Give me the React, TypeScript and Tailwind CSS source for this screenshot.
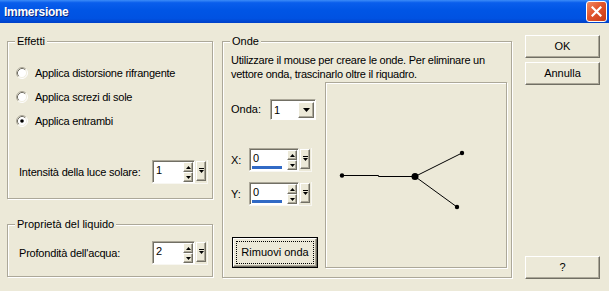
import React from "react";

const raised =
  "border border-t-white border-l-white border-r-[#716F64] border-b-[#716F64] shadow-[inset_-1px_-1px_0_#ACA899] bg-[#ECE9D8]";
const sunken =
  "border border-t-[#ACA899] border-l-[#ACA899] border-r-white border-b-white";

function Radio({ checked, label }: { checked?: boolean; label: string }) {
  return (
    <div className="flex items-center h-[16px]">
      <svg width="12" height="12" viewBox="0 0 12 12" className="shrink-0">
        <circle cx="6" cy="6" r="5" fill="#fff" />
        <path d="M2.11 9.89A5.5 5.5 0 0 1 9.89 2.11" fill="none" stroke="#ACA899" />
        <path d="M9.89 2.11A5.5 5.5 0 0 1 2.11 9.89" fill="none" stroke="#fff" />
        <path d="M2.82 9.18A4.5 4.5 0 0 1 9.18 2.82" fill="none" stroke="#716F64" />
        <path d="M9.18 2.82A4.5 4.5 0 0 1 2.82 9.18" fill="none" stroke="#F1EFE2" />
        {checked && <circle cx="6" cy="6" r="1.8" fill="#000" />}
      </svg>
      <span className="ml-[7px] tracking-[-0.25px]">{label}</span>
    </div>
  );
}

function Arrow({ up }: { up?: boolean }) {
  return (
    <svg width="5" height="3" viewBox="0 0 5 3">
      {up ? <path d="M0 3H5L2.5 0Z" fill="#000" /> : <path d="M0 0H5L2.5 3Z" fill="#000" />}
    </svg>
  );
}

function Spin({ value, fieldW, bar }: { value: string; fieldW: string; bar?: boolean }) {
  return (
    <div className="flex items-start h-[24px] border-r border-b border-r-[#F8F7F2] border-b-[#F8F7F2] pr-[1px]">
      <div className={`flex h-[23px] ${fieldW} ${sunken}`}>
        <div className="flex flex-1 bg-white shadow-[inset_1px_1px_0_#716F64]">
          <div className="flex flex-1 flex-col pl-[3px] pt-[2px]">
            <span className="leading-[15px]">{value}</span>
            {bar && <div className="mt-auto mb-[1px] -ml-[1px] h-[3px] w-[30px] bg-[#316AC5]" />}
          </div>
          <div className="flex flex-col w-[11px] pt-[1px] pr-[1px]">
            <div className={`h-[10px] flex items-center justify-center ${raised}`}>
              <Arrow up />
            </div>
            <div className={`h-[10px] flex items-center justify-center ${raised}`}>
              <Arrow />
            </div>
          </div>
        </div>
      </div>
      <div className={`ml-[1px] mt-[1px] w-[10px] h-[20px] flex items-center justify-center ${raised}`}>
        <svg width="5" height="6" viewBox="0 0 5 6">
          <rect x="0" y="0" width="5" height="1" fill="#000" />
          <path d="M0 2H5L2.5 5Z" fill="#000" />
        </svg>
      </div>
    </div>
  );
}

export default function App() {
  return (
    <div className="w-[609px] h-[291px] bg-[#ECE9D8] flex flex-col overflow-hidden font-['Liberation_Sans',Arial,sans-serif] text-[11px] text-black">
      {/* Title bar */}
      <div className="h-[23px] shrink-0 flex items-center pl-[4px] pr-[2px] bg-[linear-gradient(180deg,#3C8CF8_0%,#0A5EEC_12%,#0055E5_45%,#0052E2_80%,#0040C8_100%)]">
        <span className="flex-1 text-white font-bold text-[12px] tracking-[-0.3px] [text-shadow:1px_1px_0_#0A2680]">
          Immersione
        </span>
        <div className="w-[21px] h-[21px] rounded-[3px] border border-white bg-[linear-gradient(135deg,#F08A64_0%,#E2542C_45%,#C63A16_100%)] flex items-center justify-center">
          <svg width="11" height="11" viewBox="0 0 11 11">
            <path d="M1.5 1.5L9.5 9.5M9.5 1.5L1.5 9.5" stroke="#fff" strokeWidth="2.2" strokeLinecap="square" />
          </svg>
        </div>
      </div>

      {/* Body */}
      <div className="flex flex-1 pl-[7px] pt-[12px]">
        {/* Left column */}
        <div className="flex flex-col w-[206px]">
          <fieldset className="m-0 p-0 border border-[#ACA899] shadow-[inset_1px_1px_0_#fff,1px_1px_0_#fff]">
            <legend className="ml-[7px] px-[2px] leading-[13px] bg-[#ECE9D8]">Effetti</legend>
            <div className="pl-[8px] pt-[17px] pb-[14px] flex flex-col">
              <div className="flex flex-col gap-[8px]">
                <Radio label="Applica distorsione rifrangente" />
                <Radio label="Applica screzi di sole" />
                <Radio checked label="Applica entrambi" />
              </div>
              <div className="mt-[31px] flex items-center">
                <span className="ml-[3px] w-[133px] tracking-[-0.2px]">Intensità della luce solare:</span>
                <Spin value="1" fieldW="w-[43px]" />
              </div>
            </div>
          </fieldset>

          <fieldset className="mt-[19px] m-0 p-0 border border-[#ACA899] shadow-[inset_1px_1px_0_#fff,1px_1px_0_#fff]">
            <legend className="ml-[7px] px-[2px] leading-[13px] bg-[#ECE9D8]">Proprietà del liquido</legend>
            <div className="pl-[8px] pt-[10px] pb-[11px] flex items-center">
              <span className="ml-[3px] w-[133px] tracking-[-0.2px]">Profondità dell'acqua:</span>
              <Spin value="2" fieldW="w-[43px]" />
            </div>
          </fieldset>
        </div>

        {/* Onde */}
        <fieldset className="ml-[9px] m-0 p-0 w-[290px] self-start border border-[#ACA899] shadow-[inset_1px_1px_0_#fff,1px_1px_0_#fff]">
          <legend className="ml-[7px] px-[2px] leading-[13px] bg-[#ECE9D8]">Onde</legend>
          <div className="pl-[8px] pr-[4px] pt-[5px] pb-[9px] flex flex-col">
            <p className="leading-[14px] tracking-[-0.25px]">
              Utilizzare il mouse per creare le onde. Per eliminare un
              <br />
              vettore onda, trascinarlo oltre il riquadro.
            </p>
            <div className="mt-[1px] flex">
              <div className="w-[94px] shrink-0 flex flex-col">
                <div className="mt-[17px] flex items-center h-[21px]">
                  <span className="w-[39px]">Onda:</span>
                  <div className={`w-[46px] h-[21px] flex ${sunken}`}>
                    <div className="flex flex-1 bg-white shadow-[inset_1px_1px_0_#716F64]">
                      <span className="flex-1 pl-[3px] pt-[3px] leading-[14px]">1</span>
                      <div className={`w-[16px] mt-[2px] mb-[1px] mr-[1px] flex items-center justify-center ${raised}`}>
                        <svg width="7" height="4" viewBox="0 0 7 4">
                          <path d="M0 0H7L3.5 4Z" fill="#000" />
                        </svg>
                      </div>
                    </div>
                  </div>
                </div>
                <div className="mt-[28px] flex items-center h-[24px]">
                  <span className="w-[18px]">X:</span>
                  <Spin value="0" fieldW="w-[50px]" bar />
                </div>
                <div className="mt-[10px] flex items-center h-[24px]">
                  <span className="w-[18px]">Y:</span>
                  <Spin value="0" fieldW="w-[50px]" bar />
                </div>
                <div className="mt-[31px] ml-[1px] w-[86px] h-[31px] border border-black">
                  <div className={`h-full p-[2px] ${raised}`}>
                    <div className="h-full border border-dotted border-black flex items-center justify-center text-[11px]">
                      Rimuovi onda
                    </div>
                  </div>
                </div>
              </div>
              <div className="flex-1 h-[186px] border border-[#ACA899] shadow-[1px_1px_0_#fff,inset_1px_1px_0_#fff]">
                <svg width="100%" height="100%" viewBox="0 0 180 184">
                  <path d="M16 92.5H52.5V93.5H89" fill="none" stroke="#000" strokeWidth="1" />
                  <path d="M89 93.5L136 70" stroke="#000" strokeWidth="1" />
                  <path d="M89 93.5L131 124" stroke="#000" strokeWidth="1" />
                  <circle cx="16" cy="92.5" r="2.2" fill="#000" />
                  <circle cx="136" cy="70" r="2.2" fill="#000" />
                  <circle cx="131" cy="124" r="2.2" fill="#000" />
                  <circle cx="89" cy="93.5" r="3.5" fill="#000" />
                </svg>
              </div>
            </div>
          </div>
        </fieldset>

        {/* Buttons */}
        <div className="ml-[13px] w-[75px] flex flex-col pb-[12px]">
          <div className={`h-[23px] flex items-center justify-center ${raised}`}>OK</div>
          <div className={`mt-[4px] h-[23px] flex items-center justify-center ${raised}`}>Annulla</div>
          <div className={`mt-auto h-[23px] flex items-center justify-center ${raised}`}>?</div>
        </div>
      </div>
    </div>
  );
}
